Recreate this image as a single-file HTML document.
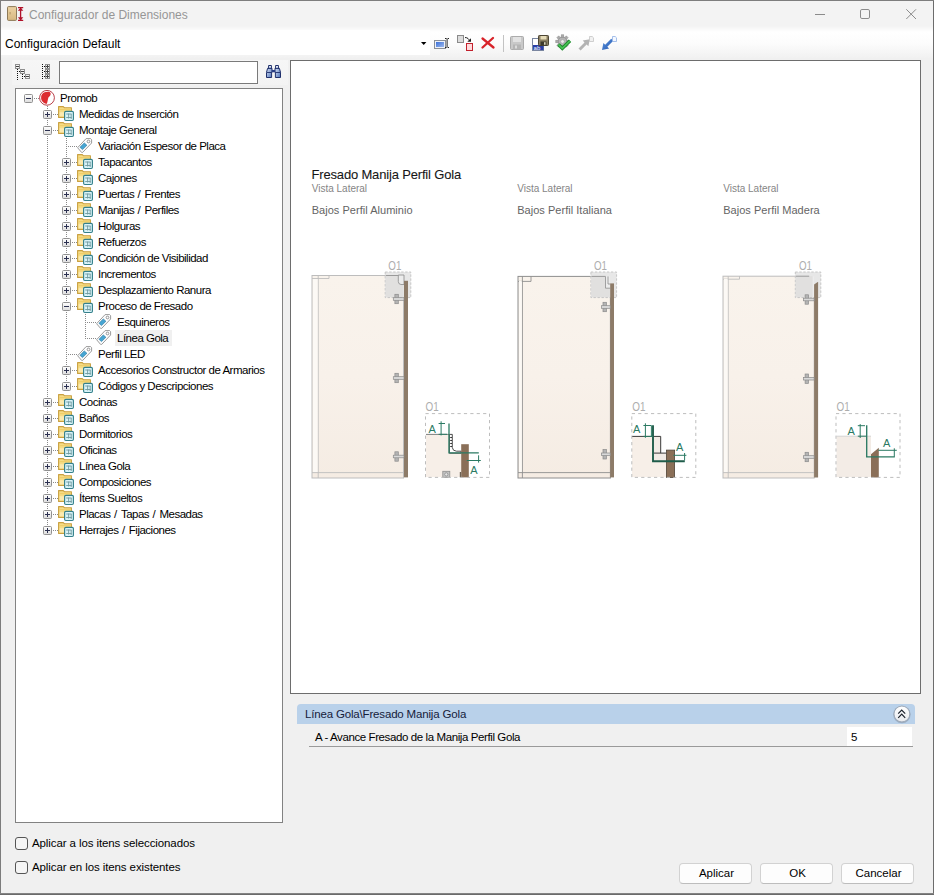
<!DOCTYPE html>
<html lang="es">
<head>
<meta charset="utf-8">
<title>Configurador de Dimensiones</title>
<style>
html,body{margin:0;padding:0;}
body{width:934px;height:895px;overflow:hidden;background:#f0f0f0;font-family:"Liberation Sans",Arial,sans-serif;font-size:11px;color:#000;position:relative;}
#win{position:absolute;left:0;top:0;width:934px;height:895px;box-sizing:border-box;background:#f0f0f0;overflow:hidden;}
.abs{position:absolute;}
#titlebar{position:absolute;left:0;top:0;width:934px;height:32px;background:linear-gradient(#f3f3f3 0,#f3f3f3 26px,#ffffff 32px);}
#title{position:absolute;left:29px;top:8px;font-size:12px;line-height:14px;color:#969696;white-space:nowrap;}
#toolbar{position:absolute;left:0;top:32px;width:934px;height:26px;background:linear-gradient(#ffffff 0%,#fcfcfc 45%,#f1f1f1 100%);}
#combo{position:absolute;left:1px;top:30px;width:429px;height:25px;background:#fff;}
#combotx{position:absolute;left:5px;top:37px;font-size:12px;line-height:14px;white-space:nowrap;color:#000;}
#bL{position:absolute;left:0;top:0;width:1px;height:895px;background:#7c7c7c;}
#bR{position:absolute;left:933px;top:0;width:1px;height:895px;background:#6c6c6c;}
#bT{position:absolute;left:0;top:0;width:934px;height:1px;background:#7e7e7e;}
#bB{position:absolute;left:0;top:893px;width:934px;height:2px;background:linear-gradient(#909090,#5e5e5e);}
#search{position:absolute;left:59px;top:61px;width:199px;height:23px;box-sizing:border-box;border:1px solid #7a7a7a;background:#fff;}
#treebox{position:absolute;left:15px;top:88px;width:268px;height:735px;box-sizing:border-box;border:1px solid #828282;background:#fff;}
#view{position:absolute;left:290px;top:60px;width:631px;height:634px;box-sizing:border-box;border:1px solid #6d6d6d;background:#fff;}
.tl{position:absolute;}
.tl line{stroke:#8a8a8a;stroke-width:1;stroke-dasharray:1 1;shape-rendering:crispEdges;}
.ex,.ic{position:absolute;overflow:visible;}
.tx{position:absolute;height:16px;line-height:16px;font-size:11.5px;letter-spacing:-0.5px;margin-left:1px;white-space:nowrap;padding:0 1px;color:#000;}
.sl{letter-spacing:0.25px;}
.tx.sel{background:#f0f0f0;margin-left:0;padding:0 2px 0 2px;width:53px;}
.cb{position:absolute;width:13px;height:13px;box-sizing:border-box;border:1px solid #555;border-radius:3px;background:#f5f5f5;}
.cbt{position:absolute;font-size:11.5px;line-height:13px;white-space:nowrap;letter-spacing:-0.1px;}
.btn{position:absolute;top:863px;width:73px;height:21px;box-sizing:border-box;border:1px solid #d2d2d2;border-bottom-color:#bdbdbd;border-radius:4px;background:#fdfdfd;text-align:center;font-size:11.5px;line-height:19px;letter-spacing:0;padding-left:2px;}
#ghead{position:absolute;left:297px;top:704px;width:618px;height:20px;background:#b9d1ea;border-radius:4px 4px 0 0;}
#gheadtx{position:absolute;left:305px;top:707px;color:#15203a;font-size:11.5px;line-height:14px;white-space:nowrap;letter-spacing:-0.17px;}
#grow{position:absolute;left:309px;top:746px;width:604px;height:1px;background:#9a9a9a;}
#growtx{position:absolute;left:315px;top:730px;font-size:11.5px;line-height:14px;white-space:nowrap;letter-spacing:-0.4px;}
#ginput{position:absolute;left:847px;top:727px;width:65px;height:19px;background:#fff;}
#gval{position:absolute;left:851px;top:730px;font-size:11.5px;line-height:14px;}
</style>
</head>
<body>
<svg width="0" height="0" style="position:absolute">
<defs>
<linearGradient id="gbox" x1="0" y1="0" x2="0" y2="1"><stop offset="0" stop-color="#ffffff"/><stop offset="1" stop-color="#dcdcdc"/></linearGradient>
<symbol id="plus" viewBox="0 0 9 9"><rect x="0.5" y="0.5" width="8" height="8" rx="1" fill="url(#gbox)" stroke="#919191"/><path d="M2 4.5H7M4.5 2V7" stroke="#2b3050" stroke-width="1" shape-rendering="crispEdges"/></symbol>
<symbol id="minus" viewBox="0 0 9 9"><rect x="0.5" y="0.5" width="8" height="8" rx="1" fill="url(#gbox)" stroke="#919191"/><path d="M2 4.5H7" stroke="#2b3050" stroke-width="1" shape-rendering="crispEdges"/></symbol>
<symbol id="folder" viewBox="0 0 16 16"><path d="M0.6 0.6H5.3L6.3 1.7H13.4V11.4H0.6Z" fill="#f6dc86" stroke="#c9a040" stroke-width="1.1" stroke-linejoin="round"/><path d="M1.6 3H12.4V4.2H1.6Z" fill="#efcf6a"/><path d="M1.6 6.2H12.4V10.4H1.6Z" fill="#fbeab0"/><rect x="6.6" y="5.4" width="8.8" height="9.1" rx="1.2" fill="#d8f3f9" stroke="#35808b" stroke-width="1.15"/><path d="M8.2 8H13.6M8.2 11.5H13.6M10.6 7.6V12.5M13.2 8V13" stroke="#6f9a9f" stroke-width="0.9" fill="none"/></symbol>
<symbol id="tag" viewBox="0 0 16 16"><path d="M9.1 0.6H13.6L14.6 1.6V5L5.7 14.4H4.6L0.6 9.7Z" fill="#fdfdfe" stroke="#909090" stroke-width="0.9" stroke-linejoin="round"/><path d="M7.3 4.9L9.9 7.3L5.5 11.6L3 9.3Z" fill="#46a5d3" stroke="#1f7099" stroke-width="0.6"/><circle cx="11.5" cy="3.5" r="1.35" fill="#fff" stroke="#8a8a8a" stroke-width="0.9"/></symbol>
<symbol id="promob" viewBox="0 0 16 16"><circle cx="8" cy="7.8" r="7.4" fill="#fff" stroke="#b8404a" stroke-width="1"/><path d="M5 2.6C7 1.7 9.6 1.6 11 2.3C11.9 3.2 11.8 4.6 11.2 5.6C10.6 6.2 10.2 6.9 9.4 7.6C9 8.6 8.9 9.8 8.6 11C8.4 12.2 8.1 13.2 7.5 13.9C5.8 13.6 4 12.6 3 11C2 9.4 1.9 7 2.4 5.4C3 4.2 3.8 3.2 5 2.6Z" fill="#dd2b30"/></symbol>
</defs>
</svg>
<div id="win">
<div id="titlebar"></div>
<div id="title">Configurador de Dimensiones</div>
<div id="toolbar"></div>
<div id="combo"></div>
<div id="combotx">Configuración Default</div>
<div class="abs" style="left:12px;top:60px;width:276px;height:25px;background:linear-gradient(#f6f6f6,#f3f3f3);"></div>
<!-- title icon -->
<svg class="abs" style="left:6px;top:5px" width="20" height="18" viewBox="6 5 20 18">
<defs><linearGradient id="door" x1="0" y1="0" x2="0" y2="1"><stop offset="0" stop-color="#ecd3a4"/><stop offset="1" stop-color="#d6b880"/></linearGradient></defs>
<rect x="7.5" y="6.6" width="9" height="13.8" rx="1" fill="url(#door)" stroke="#8d7a58" stroke-width="1"/>
<rect x="9.5" y="12" width="1.2" height="2.4" fill="#b89d6c"/>
<path d="M18 7.6H23.2M18 20.4H23.2M20.6 8V20" stroke="#b0122a" stroke-width="1.3" fill="none"/>
<path d="M20.6 7.6L23.3 10.8H17.9ZM20.6 20.4L23.3 17.2H17.9Z" fill="#b0122a"/>
</svg>
<!-- window buttons -->
<svg class="abs" style="left:810px;top:4px" width="115" height="22" viewBox="810 4 115 22">
<path d="M815 14.5H825" stroke="#8b8b8b" stroke-width="1"/>
<rect x="860.5" y="9.5" width="9" height="9" rx="1.4" fill="none" stroke="#8b8b8b" stroke-width="1"/>
<path d="M906.3 9.3L916 19M916 9.3L906.3 19" stroke="#8b8b8b" stroke-width="1" fill="none"/>
</svg>
<!-- combo arrow -->
<svg class="abs" style="left:420px;top:41px" width="8" height="5"><path d="M1 1H6.4L3.7 4Z" fill="#000"/></svg>
<!-- toolbar icons -->
<svg class="abs" style="left:430px;top:32px" width="195" height="24" viewBox="430 32 195 24">
<defs>
<linearGradient id="bl1" x1="0" y1="0" x2="1" y2="1"><stop offset="0" stop-color="#3a6fd8"/><stop offset="1" stop-color="#9db9ee"/></linearGradient>
<linearGradient id="bl2" x1="0" y1="0" x2="1" y2="1"><stop offset="0" stop-color="#5b93dd"/><stop offset="1" stop-color="#2458b0"/></linearGradient>
</defs>
<!-- rename -->
<rect x="434.5" y="40.5" width="11" height="8" fill="#eef2f8" stroke="#8a8f98"/>
<rect x="436" y="42" width="8" height="5" fill="url(#bl1)"/>
<path d="M445 38.5H446.6M447.6 38.5H449M445 47.5H446.6M447.6 47.5H449M447.1 39V47" stroke="#222" stroke-width="1" fill="none"/>
<!-- copy -->
<rect x="457.5" y="35.5" width="6" height="7" fill="#dcdcdc" stroke="#8a8a8a"/>
<rect x="466.5" y="43.5" width="6" height="7" fill="#ffd9dc" stroke="#c2202c"/>
<path d="M465 37.5C467.5 37.5 469 39 469.5 41" stroke="#222" stroke-width="1" fill="none"/>
<path d="M467.3 41.8H471V38.2Z" fill="#222"/>
<!-- red X -->
<path d="M482.5 38.5L493.5 47.5M493 38L482.5 47.5" stroke="#d8232a" stroke-width="2.3" stroke-linecap="round" fill="none"/>
<!-- separator -->
<path d="M503.5 35V52" stroke="#c3c3c3" stroke-width="1"/>
<!-- save disabled -->
<rect x="510.5" y="36.5" width="13" height="13" rx="1" fill="#c9c9c9" stroke="#ababab"/>
<rect x="513" y="37" width="8" height="5" fill="#e2e2e2"/>
<rect x="513" y="44.5" width="8" height="5" fill="#b5b5b5"/><rect x="515" y="45.5" width="2" height="3" fill="#dcdcdc"/>
<!-- save as -->
<rect x="532.5" y="38.5" width="11" height="12" fill="#fff" stroke="#7a86a0"/>
<rect x="533" y="45" width="10.5" height="5" fill="#2b3fa8"/>
<text x="533.6" y="49.6" font-family="Liberation Sans, sans-serif" font-size="6" fill="#fff">ab</text>
<rect x="538.5" y="35.5" width="10" height="10" rx="0.8" fill="#8a7f63" stroke="#4d4634"/>
<rect x="540.5" y="36" width="6" height="3.5" fill="#e6dcb8"/><rect x="540.5" y="41.5" width="6" height="4" fill="#3c382c"/><rect x="544" y="42.2" width="1.6" height="2.6" fill="#d8d2b8"/>
<!-- gear + check -->
<g transform="translate(562.5 41.5)">
<circle r="4.6" fill="#b5b5b5" stroke="#909090" stroke-width="0.8"/>
<g fill="#a9a9a9" stroke="#8e8e8e" stroke-width="0.5">
<rect x="-1.3" y="-6.7" width="2.6" height="2.6"/><rect x="-1.3" y="4.1" width="2.6" height="2.6"/><rect x="-6.7" y="-1.3" width="2.6" height="2.6"/><rect x="4.1" y="-1.3" width="2.6" height="2.6"/>
<rect x="-1.3" y="-6.7" width="2.6" height="2.6" transform="rotate(45)"/><rect x="-1.3" y="-6.7" width="2.6" height="2.6" transform="rotate(135)"/><rect x="-1.3" y="-6.7" width="2.6" height="2.6" transform="rotate(225)"/><rect x="-1.3" y="-6.7" width="2.6" height="2.6" transform="rotate(315)"/>
</g>
<circle r="1.9" fill="#ececec" stroke="#9a9a9a" stroke-width="0.6"/>
</g>
<path d="M558.5 44.5L562.3 48.3L570 40.8" stroke="#1f8a2e" stroke-width="3.4" fill="none" stroke-linejoin="miter"/>
<path d="M558.5 44.5L562.3 48.3L570 40.8" stroke="#49c455" stroke-width="1.6" fill="none"/>
<!-- gray arrow -->
<path d="M579 50L580.4 42.9L582.2 44.7L588.2 38.7L590.3 40.8L584.3 46.8L586.1 48.6Z" fill="#b4b4b4" transform="rotate(180 584.4 44.6)"/>
<path d="M589.5 36.5H592.2L593.5 37.8V41.5H589.5Z" fill="#f1f1f1" stroke="#c4c4c4" stroke-width="0.8"/>
<!-- blue arrow -->
<path d="M602 50L603.4 42.9L605.2 44.7L611.2 38.7L613.3 40.8L607.3 46.8L609.1 48.6Z" fill="url(#bl2)"/>
<path d="M612.5 36.5H615.2L616.5 37.8V41.5H612.5Z" fill="#f4f8ff" stroke="#8fb0e4" stroke-width="0.8"/>
</svg>
<!-- tree toolbar icons -->
<svg class="abs" style="left:14px;top:63px" width="40" height="18" viewBox="14 63 40 18" shape-rendering="crispEdges"><rect x="15" y="64" width="5" height="5" fill="#8f8f8f"/><rect x="16" y="65" width="3" height="3" fill="#f4f4f4"/><rect x="16" y="66" width="3" height="1" fill="#444"/><rect x="20" y="69" width="5" height="5" fill="#8f8f8f"/><rect x="21" y="70" width="3" height="3" fill="#f4f4f4"/><rect x="21" y="71" width="3" height="1" fill="#444"/><rect x="25" y="74" width="5" height="5" fill="#8f8f8f"/><rect x="26" y="75" width="3" height="3" fill="#f4f4f4"/><rect x="26" y="76" width="3" height="1" fill="#444"/><rect x="45" y="64" width="5" height="5" fill="#8f8f8f"/><rect x="46" y="65" width="3" height="3" fill="#f4f4f4"/><rect x="46" y="66" width="3" height="1" fill="#444"/><rect x="47" y="65" width="1" height="3" fill="#444"/><rect x="45" y="69" width="5" height="5" fill="#8f8f8f"/><rect x="46" y="70" width="3" height="3" fill="#f4f4f4"/><rect x="46" y="71" width="3" height="1" fill="#444"/><rect x="47" y="70" width="1" height="3" fill="#444"/><rect x="45" y="74" width="5" height="5" fill="#8f8f8f"/><rect x="46" y="75" width="3" height="3" fill="#f4f4f4"/><rect x="46" y="76" width="3" height="1" fill="#444"/><rect x="47" y="75" width="1" height="3" fill="#444"/><rect x="17" y="69" width="1" height="1" fill="#111"/><rect x="17" y="71" width="1" height="1" fill="#111"/><rect x="17" y="73" width="1" height="1" fill="#111"/><rect x="17" y="75" width="1" height="1" fill="#111"/><rect x="17" y="77" width="1" height="1" fill="#111"/><rect x="17" y="79" width="1" height="1" fill="#111"/><rect x="22" y="74" width="1" height="1" fill="#111"/><rect x="22" y="76" width="1" height="1" fill="#111"/><rect x="22" y="78" width="1" height="1" fill="#111"/><rect x="42" y="64" width="1" height="1" fill="#111"/><rect x="42" y="66" width="1" height="1" fill="#111"/><rect x="42" y="68" width="1" height="1" fill="#111"/><rect x="42" y="70" width="1" height="1" fill="#111"/><rect x="42" y="72" width="1" height="1" fill="#111"/><rect x="42" y="74" width="1" height="1" fill="#111"/><rect x="42" y="76" width="1" height="1" fill="#111"/><rect x="42" y="78" width="1" height="1" fill="#111"/><rect x="19" y="71" width="1" height="1" fill="#111"/><rect x="24" y="76" width="1" height="1" fill="#111"/><rect x="44" y="66" width="1" height="1" fill="#111"/><rect x="44" y="71" width="1" height="1" fill="#111"/><rect x="44" y="76" width="1" height="1" fill="#111"/></svg>
<!-- binoculars -->
<svg class="abs" style="left:265px;top:64px" width="17" height="15" viewBox="265 64 17 15">
<defs><linearGradient id="bn" x1="0" y1="0" x2="1" y2="1"><stop offset="0" stop-color="#eaf2fd"/><stop offset="1" stop-color="#4b6fb8"/></linearGradient></defs>
<g fill="url(#bn)" stroke="#1f2f6b" stroke-width="1">
<path d="M268.6 65.5H271.4V68.3H272V72.3H271.6V77.5H266.5V72.3L267.6 68.3H268.6Z"/>
<path d="M275.6 65.5H278.4V68.3H279.4L280.5 72.3V77.5H275.4V72.3H275V68.3H275.6Z"/>
</g>
<path d="M272 70H275V72.3H272Z" fill="#2b3f86"/>
<path d="M267 72.5H271.6M275.4 72.5H280.4M268 68.5H272M275 68.5H279" stroke="#1f2f6b" stroke-width="0.9"/>
<rect x="269.5" y="66" width="1.2" height="1.2" fill="#fff"/><rect x="276.5" y="66" width="1.2" height="1.2" fill="#fff"/>
</svg>

<div id="search"></div>
<div id="treebox"></div>
<svg class="tl" width="300" height="560" style="left:0;top:0"><line x1="47.5" y1="106" x2="47.5" y2="530"/><line x1="66.5" y1="138" x2="66.5" y2="386"/><line x1="85.5" y1="314" x2="85.5" y2="339"/><line x1="34" y1="98.5" x2="39" y2="98.5"/><line x1="53" y1="114.5" x2="58" y2="114.5"/><line x1="53" y1="130.5" x2="58" y2="130.5"/><line x1="66" y1="146.5" x2="77" y2="146.5"/><line x1="72" y1="162.5" x2="77" y2="162.5"/><line x1="72" y1="178.5" x2="77" y2="178.5"/><line x1="72" y1="194.5" x2="77" y2="194.5"/><line x1="72" y1="210.5" x2="77" y2="210.5"/><line x1="72" y1="226.5" x2="77" y2="226.5"/><line x1="72" y1="242.5" x2="77" y2="242.5"/><line x1="72" y1="258.5" x2="77" y2="258.5"/><line x1="72" y1="274.5" x2="77" y2="274.5"/><line x1="72" y1="290.5" x2="77" y2="290.5"/><line x1="72" y1="306.5" x2="77" y2="306.5"/><line x1="85" y1="322.5" x2="96" y2="322.5"/><line x1="85" y1="338.5" x2="96" y2="338.5"/><line x1="66" y1="354.5" x2="77" y2="354.5"/><line x1="72" y1="370.5" x2="77" y2="370.5"/><line x1="72" y1="386.5" x2="77" y2="386.5"/><line x1="53" y1="402.5" x2="58" y2="402.5"/><line x1="53" y1="418.5" x2="58" y2="418.5"/><line x1="53" y1="434.5" x2="58" y2="434.5"/><line x1="53" y1="450.5" x2="58" y2="450.5"/><line x1="53" y1="466.5" x2="58" y2="466.5"/><line x1="53" y1="482.5" x2="58" y2="482.5"/><line x1="53" y1="498.5" x2="58" y2="498.5"/><line x1="53" y1="514.5" x2="58" y2="514.5"/><line x1="53" y1="530.5" x2="58" y2="530.5"/></svg>
<svg class="ex" style="left:24px;top:94px" width="9" height="9"><use href="#minus"/></svg>
<svg class="ic" style="left:39px;top:90px" width="16" height="16"><use href="#promob"/></svg>
<div class="tx" style="left:58px;top:90px">Promob</div>
<svg class="ex" style="left:43px;top:110px" width="9" height="9"><use href="#plus"/></svg>
<svg class="ic" style="left:58px;top:106px" width="16" height="16"><use href="#folder"/></svg>
<div class="tx" style="left:77px;top:106px">Medidas de Inserción</div>
<svg class="ex" style="left:43px;top:126px" width="9" height="9"><use href="#minus"/></svg>
<svg class="ic" style="left:58px;top:122px" width="16" height="16"><use href="#folder"/></svg>
<div class="tx" style="left:77px;top:122px">Montaje General</div>
<svg class="ic" style="left:77px;top:138px" width="16" height="16"><use href="#tag"/></svg>
<div class="tx" style="left:96px;top:138px">Variación Espesor de Placa</div>
<svg class="ex" style="left:62px;top:158px" width="9" height="9"><use href="#plus"/></svg>
<svg class="ic" style="left:77px;top:154px" width="16" height="16"><use href="#folder"/></svg>
<div class="tx" style="left:96px;top:154px">Tapacantos</div>
<svg class="ex" style="left:62px;top:174px" width="9" height="9"><use href="#plus"/></svg>
<svg class="ic" style="left:77px;top:170px" width="16" height="16"><use href="#folder"/></svg>
<div class="tx" style="left:96px;top:170px">Cajones</div>
<svg class="ex" style="left:62px;top:190px" width="9" height="9"><use href="#plus"/></svg>
<svg class="ic" style="left:77px;top:186px" width="16" height="16"><use href="#folder"/></svg>
<div class="tx" style="left:96px;top:186px">Puertas<span class="sl"> / </span>Frentes</div>
<svg class="ex" style="left:62px;top:206px" width="9" height="9"><use href="#plus"/></svg>
<svg class="ic" style="left:77px;top:202px" width="16" height="16"><use href="#folder"/></svg>
<div class="tx" style="left:96px;top:202px">Manijas<span class="sl"> / </span>Perfiles</div>
<svg class="ex" style="left:62px;top:222px" width="9" height="9"><use href="#plus"/></svg>
<svg class="ic" style="left:77px;top:218px" width="16" height="16"><use href="#folder"/></svg>
<div class="tx" style="left:96px;top:218px">Holguras</div>
<svg class="ex" style="left:62px;top:238px" width="9" height="9"><use href="#plus"/></svg>
<svg class="ic" style="left:77px;top:234px" width="16" height="16"><use href="#folder"/></svg>
<div class="tx" style="left:96px;top:234px">Refuerzos</div>
<svg class="ex" style="left:62px;top:254px" width="9" height="9"><use href="#plus"/></svg>
<svg class="ic" style="left:77px;top:250px" width="16" height="16"><use href="#folder"/></svg>
<div class="tx" style="left:96px;top:250px">Condición de Visibilidad</div>
<svg class="ex" style="left:62px;top:270px" width="9" height="9"><use href="#plus"/></svg>
<svg class="ic" style="left:77px;top:266px" width="16" height="16"><use href="#folder"/></svg>
<div class="tx" style="left:96px;top:266px">Incrementos</div>
<svg class="ex" style="left:62px;top:286px" width="9" height="9"><use href="#plus"/></svg>
<svg class="ic" style="left:77px;top:282px" width="16" height="16"><use href="#folder"/></svg>
<div class="tx" style="left:96px;top:282px">Desplazamiento Ranura</div>
<svg class="ex" style="left:62px;top:302px" width="9" height="9"><use href="#minus"/></svg>
<svg class="ic" style="left:77px;top:298px" width="16" height="16"><use href="#folder"/></svg>
<div class="tx" style="left:96px;top:298px">Proceso de Fresado</div>
<svg class="ic" style="left:96px;top:314px" width="16" height="16"><use href="#tag"/></svg>
<div class="tx" style="left:115px;top:314px">Esquineros</div>
<svg class="ic" style="left:96px;top:330px" width="16" height="16"><use href="#tag"/></svg>
<div class="tx sel" style="left:115px;top:330px">Línea Gola</div>
<svg class="ic" style="left:77px;top:346px" width="16" height="16"><use href="#tag"/></svg>
<div class="tx" style="left:96px;top:346px">Perfil LED</div>
<svg class="ex" style="left:62px;top:366px" width="9" height="9"><use href="#plus"/></svg>
<svg class="ic" style="left:77px;top:362px" width="16" height="16"><use href="#folder"/></svg>
<div class="tx" style="left:96px;top:362px">Accesorios Constructor de Armarios</div>
<svg class="ex" style="left:62px;top:382px" width="9" height="9"><use href="#plus"/></svg>
<svg class="ic" style="left:77px;top:378px" width="16" height="16"><use href="#folder"/></svg>
<div class="tx" style="left:96px;top:378px">Códigos y Descripciones</div>
<svg class="ex" style="left:43px;top:398px" width="9" height="9"><use href="#plus"/></svg>
<svg class="ic" style="left:58px;top:394px" width="16" height="16"><use href="#folder"/></svg>
<div class="tx" style="left:77px;top:394px">Cocinas</div>
<svg class="ex" style="left:43px;top:414px" width="9" height="9"><use href="#plus"/></svg>
<svg class="ic" style="left:58px;top:410px" width="16" height="16"><use href="#folder"/></svg>
<div class="tx" style="left:77px;top:410px">Baños</div>
<svg class="ex" style="left:43px;top:430px" width="9" height="9"><use href="#plus"/></svg>
<svg class="ic" style="left:58px;top:426px" width="16" height="16"><use href="#folder"/></svg>
<div class="tx" style="left:77px;top:426px">Dormitorios</div>
<svg class="ex" style="left:43px;top:446px" width="9" height="9"><use href="#plus"/></svg>
<svg class="ic" style="left:58px;top:442px" width="16" height="16"><use href="#folder"/></svg>
<div class="tx" style="left:77px;top:442px">Oficinas</div>
<svg class="ex" style="left:43px;top:462px" width="9" height="9"><use href="#plus"/></svg>
<svg class="ic" style="left:58px;top:458px" width="16" height="16"><use href="#folder"/></svg>
<div class="tx" style="left:77px;top:458px">Línea Gola</div>
<svg class="ex" style="left:43px;top:478px" width="9" height="9"><use href="#plus"/></svg>
<svg class="ic" style="left:58px;top:474px" width="16" height="16"><use href="#folder"/></svg>
<div class="tx" style="left:77px;top:474px">Composiciones</div>
<svg class="ex" style="left:43px;top:494px" width="9" height="9"><use href="#plus"/></svg>
<svg class="ic" style="left:58px;top:490px" width="16" height="16"><use href="#folder"/></svg>
<div class="tx" style="left:77px;top:490px">Ítems Sueltos</div>
<svg class="ex" style="left:43px;top:510px" width="9" height="9"><use href="#plus"/></svg>
<svg class="ic" style="left:58px;top:506px" width="16" height="16"><use href="#folder"/></svg>
<div class="tx" style="left:77px;top:506px">Placas<span class="sl"> / </span>Tapas<span class="sl"> / </span>Mesadas</div>
<svg class="ex" style="left:43px;top:526px" width="9" height="9"><use href="#plus"/></svg>
<svg class="ic" style="left:58px;top:522px" width="16" height="16"><use href="#folder"/></svg>
<div class="tx" style="left:77px;top:522px">Herrajes<span class="sl"> / </span>Fijaciones</div>
<div id="view"></div>
<svg class="abs" style="left:291px;top:61px" width="629" height="632" viewBox="291 61 629 632" font-family="Liberation Sans, Arial, sans-serif">
<defs><linearGradient id="crm" gradientUnits="userSpaceOnUse" x1="0" y1="275" x2="0" y2="478"><stop offset="0" stop-color="#f9f3ec"/><stop offset="0.5" stop-color="#f8f1ea"/><stop offset="1" stop-color="#f5ece3"/></linearGradient></defs>
<text x="311.5" y="178.6" font-size="13" letter-spacing="-0.17" fill="#161616" stroke="#161616" stroke-width="0.08">Fresado Manija Perfil Gola</text>
<text x="311.7" y="192" font-size="10" fill="#858585">Vista Lateral</text>
<text x="311.7" y="213.8" font-size="11" letter-spacing="0.03" fill="#646464">Bajos Perfil Aluminio</text>
<text x="517.2" y="192" font-size="10" fill="#858585">Vista Lateral</text>
<text x="517.2" y="213.8" font-size="11" letter-spacing="0.03" fill="#646464">Bajos Perfil Italiana</text>
<text x="723.2" y="192" font-size="10" fill="#858585">Vista Lateral</text>
<text x="723.2" y="213.8" font-size="11" letter-spacing="0.03" fill="#646464">Bajos Perfil Madera</text>
<rect x="312" y="275.5" width="91.5" height="202.5" fill="url(#crm)" stroke="#bdbdbd" stroke-width="1"/>
<path d="M318.2 275.5V478M312 278.5H329V275.5M312 472.6H403.5" stroke="#bdbdbd" stroke-width="0.9" fill="none"/>
<rect x="313" y="279" width="4.599999999999989" height="193" fill="#fcf9f5"/>
<rect x="385.2" y="272" width="25.600000000000023" height="25.6" fill="#e7e7e7" stroke="#c6c6c6" stroke-width="1" stroke-dasharray="2.4 1.6"/>
<path d="M385.7 275.5H403.5V297H385.7Z" fill="#e1e0df"/>
<path d="M398.3 275V281.5Q398.3 284.3 401 284.5H404V275Z" fill="#ececec" stroke="#8c8c8c" stroke-width="0.8"/>
<path d="M385.7 275.5H398.5" stroke="#9a9a9a" stroke-width="1"/>
<rect x="404" y="280.8" width="4" height="196.59999999999997" fill="#8d7b68"/>
<g fill="#b4b4b4" stroke="#8b8b8b" stroke-width="0.7"><rect x="394.90000000000003" y="294.3" width="3.4" height="9.4"/><rect x="393.3" y="297.7" width="10.699999999999989" height="2.6" fill="#dadada"/></g>
<g fill="#b4b4b4" stroke="#8b8b8b" stroke-width="0.7"><rect x="394.90000000000003" y="373.3" width="3.4" height="9.4"/><rect x="393.3" y="376.7" width="10.699999999999989" height="2.6" fill="#dadada"/></g>
<g fill="#b4b4b4" stroke="#8b8b8b" stroke-width="0.7"><rect x="394.90000000000003" y="451.8" width="3.4" height="9.4"/><rect x="393.3" y="455.2" width="10.699999999999989" height="2.6" fill="#dadada"/></g>
<text x="388.3" y="269.7" font-size="13.5" fill="#adadad" textLength="13" lengthAdjust="spacingAndGlyphs">O1</text>
<rect x="518" y="276.4" width="92.39999999999998" height="201.60000000000002" fill="url(#crm)" stroke="#8e8e8e" stroke-width="1"/>
<path d="M522.4 276.4V478M518 281.4H531V276.4M518 472.6H610.4" stroke="#8e8e8e" stroke-width="0.9" fill="none"/>
<rect x="519" y="281" width="2.799999999999977" height="191" fill="#fcf9f5"/>
<rect x="590.9" y="272" width="25.700000000000045" height="25.6" fill="#e7e7e7" stroke="#c6c6c6" stroke-width="1" stroke-dasharray="2.4 1.6"/>
<path d="M591.4 276.4H610.4V297H591.4Z" fill="#e1e0df"/>
<path d="M605.5 276V288.2H610.4V276Z" fill="#ececec"/><path d="M605.5 276.4V288.2H610.2M608 276.4V284H610.2" fill="none" stroke="#8e8e8e" stroke-width="0.8"/>
<path d="M591.4 276.4H605.4" stroke="#9a9a9a" stroke-width="1"/>
<rect x="610.2" y="283.4" width="3.7999999999999545" height="194.0" fill="#8d7b68"/>
<g fill="#b4b4b4" stroke="#8b8b8b" stroke-width="0.7"><rect x="603.0" y="302.3" width="3.4" height="9.4"/><rect x="601.4" y="305.7" width="8.800000000000068" height="2.6" fill="#dadada"/></g>
<g fill="#b4b4b4" stroke="#8b8b8b" stroke-width="0.7"><rect x="603.0" y="449.6" width="3.4" height="9.4"/><rect x="601.4" y="453.0" width="8.800000000000068" height="2.6" fill="#dadada"/></g>
<text x="594" y="269.7" font-size="13.5" fill="#adadad" textLength="13" lengthAdjust="spacingAndGlyphs">O1</text>
<rect x="723" y="276.2" width="91.20000000000005" height="201.8" fill="url(#crm)" stroke="#bdbdbd" stroke-width="1"/>
<path d="M728.2 276.2V478M723 279.2H739.5V276.2M723 472.6H814.2" stroke="#bdbdbd" stroke-width="0.9" fill="none"/>
<rect x="724" y="279" width="3.6000000000000454" height="193" fill="#fcf9f5"/>
<rect x="795.3" y="272" width="25.5" height="25.6" fill="#e7e7e7" stroke="#c6c6c6" stroke-width="1" stroke-dasharray="2.4 1.6"/>
<path d="M795.8 276.2H814.2V297H795.8Z" fill="#e1e0df"/>
<path d="M812.6 276.2V297H814.4V276.2Z" fill="#ececec"/>
<path d="M795.8 276.2H809.2" stroke="#9a9a9a" stroke-width="1"/>
<path d="M814.1 284.4L818.1 281.7V477.4H814.1Z" fill="#8d7b68"/>
<g fill="#b4b4b4" stroke="#8b8b8b" stroke-width="0.7"><rect x="805.1" y="294.8" width="3.4" height="9.4"/><rect x="803.5" y="298.2" width="10.600000000000023" height="2.6" fill="#dadada"/></g>
<g fill="#b4b4b4" stroke="#8b8b8b" stroke-width="0.7"><rect x="805.1" y="374.0" width="3.4" height="9.4"/><rect x="803.5" y="377.4" width="10.600000000000023" height="2.6" fill="#dadada"/></g>
<g fill="#b4b4b4" stroke="#8b8b8b" stroke-width="0.7"><rect x="805.1" y="452.3" width="3.4" height="9.4"/><rect x="803.5" y="455.7" width="10.600000000000023" height="2.6" fill="#dadada"/></g>
<text x="799" y="269.7" font-size="13.5" fill="#adadad" textLength="13" lengthAdjust="spacingAndGlyphs">O1</text>
<path d="M426 434.4H449V452.8H461.2V477H426Z" fill="#f7efe8"/>
<path d="M426 434.4H449" stroke="#6f6f6f" stroke-width="0.9"/>
<path d="M449.4 434.4H452.3V447.5Q452.6 451 456.5 451.2H461.2V453.2H449.4Z" fill="#fff" stroke="#222" stroke-width="0.8"/>
<path d="M450.2 437.5H452M450.2 440.5H452M450.2 443.5H452M450.2 446.5H452" stroke="#222" stroke-width="0.9"/>
<rect x="461.2" y="444.2" width="7.6" height="33.2" fill="#8a6f58"/>
<rect x="459.8" y="472" width="1.4" height="5.4" fill="#6d6254"/>
<path d="M449 423.6V452.9H478.8" stroke="#2b7a63" stroke-width="1.3" fill="none"/>
<path d="M441.1 421.3V435.4M438.6 423.5H445M438.6 434.3H447M466.8 460.5H480.8M478.6 455.3V462.6" stroke="#2b7a63" stroke-width="1" fill="none"/>
<text x="428.6" y="432.5" font-size="11" fill="#2b7a63">A</text><text x="470.2" y="474" font-size="11" fill="#2b7a63">A</text>
<rect x="442.8" y="471.3" width="7" height="6" fill="#c4c4c4" stroke="#8e8e8e" stroke-width="0.8"/><circle cx="446.3" cy="474.4" r="1.6" fill="#e4e4e4" stroke="#777" stroke-width="0.6"/>
<text x="425.6" y="411.2" font-size="13" fill="#adadad" textLength="13.2" lengthAdjust="spacingAndGlyphs">O1</text>
<rect x="425.5" y="413.6" width="64" height="63.8" fill="none" stroke="#bdbdbd" stroke-width="1" stroke-dasharray="3.2 3.2"/>
<path d="M632 436.4H660.7V453.1H666.4V477H632Z" fill="#f7efe8"/>
<path d="M653 436.4H660.7V453.1H666.4V461.3H653Z" fill="#f1ebe5"/>
<path d="M632 436.4H660.7V453.1M654 453.1H666.4" stroke="#3a3a3a" stroke-width="1" fill="none"/>
<rect x="666.4" y="450.1" width="8.2" height="27.3" fill="#8a6f58" stroke="#4f4438" stroke-width="0.8"/>
<path d="M653 425.2V461.3H684.8" stroke="#1f5c4a" stroke-width="1.9" fill="none"/>
<path d="M645.4 423.3V437.8M643.4 425.5H651.4V436M643.4 436.4H653M673.4 455.3H686.4M684.6 453V460.4" stroke="#2b7a63" stroke-width="1" fill="none"/>
<text x="632.9" y="433.3" font-size="11" fill="#2b7a63">A</text><text x="676" y="451.2" font-size="11" fill="#2b7a63">A</text>
<text x="632.2" y="411.2" font-size="13" fill="#adadad" textLength="13.2" lengthAdjust="spacingAndGlyphs">O1</text>
<rect x="631.8" y="413.6" width="64" height="63.8" fill="none" stroke="#bdbdbd" stroke-width="1" stroke-dasharray="3.2 3.2"/>
<path d="M836.5 436.2H871V477H836.5Z" fill="#f3ece6"/>
<path d="M836.5 436.2H871" stroke="#cfcfcf" stroke-width="0.9"/>
<path d="M871 454.3L878.8 447.8V477.4H871Z" fill="#8a6f58"/>
<path d="M866.7 425.2V456.9H894.8" stroke="#2b7a63" stroke-width="1.35" fill="none"/>
<path d="M860.2 424.1V438M857.8 425.7H865M857.8 436.2H866.5M878.4 450.3H896.8M894.3 448.3V456.8" stroke="#2b7a63" stroke-width="1" fill="none"/>
<text x="847.6" y="435.3" font-size="11" fill="#2b7a63">A</text><text x="883" y="446.6" font-size="11" fill="#2b7a63">A</text>
<text x="836.5" y="411.2" font-size="13" fill="#adadad" textLength="13.2" lengthAdjust="spacingAndGlyphs">O1</text>
<rect x="836" y="413.6" width="64" height="63.8" fill="none" stroke="#bdbdbd" stroke-width="1" stroke-dasharray="3.2 3.2"/>
</svg>
<div class="cb" style="left:15px;top:837px"></div><div class="cbt" style="left:32px;top:837px">Aplicar a los itens seleccionados</div>
<div class="cb" style="left:15px;top:861px"></div><div class="cbt" style="left:32px;top:861px">Aplicar en los itens existentes</div>
<div id="ghead"></div>
<svg class="abs" style="left:891px;top:703px" width="22" height="22" viewBox="891 703 22 22">
<defs><linearGradient id="cbg" x1="0" y1="0" x2="0" y2="1"><stop offset="0" stop-color="#ffffff"/><stop offset="1" stop-color="#e8eaee"/></linearGradient></defs>
<circle cx="901.9" cy="714.5" r="8.7" fill="#7f8c9c" fill-opacity="0.5"/>
<circle cx="901.9" cy="714" r="7.9" fill="url(#cbg)" stroke="#9aa6b6" stroke-width="0.9"/>
<path d="M898.2 713.6L901.7 710L905.2 713.6M898.2 717.8L901.7 714.2L905.2 717.8" stroke="#1c222c" stroke-width="1.2" fill="none"/>
</svg><div id="gheadtx">Línea Gola\Fresado Manija Gola</div>
<div id="ginput"></div><div id="growtx">A - Avance Fresado de la Manija Perfil Gola</div><div id="gval">5</div><div id="grow"></div>
<div class="btn" style="left:679px">Aplicar</div>
<div class="btn" style="left:760px">OK</div>
<div class="btn" style="left:841px">Cancelar</div>
<div id="bL"></div><div id="bR"></div><div id="bT"></div><div id="bB"></div>
</div>
</body>
</html>
